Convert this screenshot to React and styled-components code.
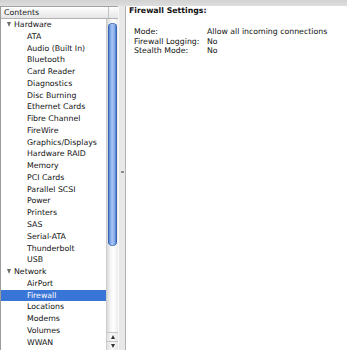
import React from 'react';
import styled, { createGlobalStyle } from 'styled-components';

const GlobalStyle = createGlobalStyle`
  html, body {
    margin: 0;
    padding: 0;
    background: #e6e6e6;
    overflow: hidden;
  }
  body {
    font-family: "DejaVu Sans", Verdana, sans-serif;
    font-size: 7.8px;
    color: #111;
  }
`;

const hardware = [
  'ATA', 'Audio (Built In)', 'Bluetooth', 'Card Reader', 'Diagnostics',
  'Disc Burning', 'Ethernet Cards', 'Fibre Channel', 'FireWire',
  'Graphics/Displays', 'Hardware RAID', 'Memory', 'PCI Cards',
  'Parallel SCSI', 'Power', 'Printers', 'SAS', 'Serial-ATA',
  'Thunderbolt', 'USB',
];

const network = ['AirPort', 'Firewall', 'Locations', 'Modems', 'Volumes', 'WWAN'];

const settings = [
  ['Mode:', 'Allow all incoming connections'],
  ['Firewall Logging:', 'No'],
  ['Stealth Mode:', 'No'],
];

const Window = styled.div`
  display: flex;
  flex-direction: column;
  width: 347px;
  height: 350px;
  overflow: hidden;
`;

const TopStrip = styled.div`
  height: 6px;
  flex: none;
  background: linear-gradient(#d2d2d2, #dedede);
`;

const Body = styled.div`
  flex: 1;
  display: flex;
  min-height: 0;
`;

const Sidebar = styled.div`
  width: 117px;
  flex: none;
  display: flex;
  flex-direction: column;
  border-left: 1px solid #9c9c9c;
  background: #fff;
`;

const HeaderRow = styled.div`
  display: flex;
  height: 11px;
  flex: none;
  border-top: 1px solid #a2a2a2;
  border-bottom: 1px solid #b2b2b2;
  background: linear-gradient(#ffffff, #f1f1f1 50%, #e6e6e6);
`;

const HeaderCell = styled.div`
  width: 104px;
  padding-left: 3px;
  line-height: 11px;
  border-right: 1px solid #c2c2c2;
  color: #1a1a1a;
`;

const ListArea = styled.div`
  flex: 1;
  display: flex;
  min-height: 0;
`;

const List = styled.div`
  width: 105px;
  flex: none;
  overflow: hidden;
`;

const Row = styled.div`
  height: 11.78px;
  line-height: 11.78px;
  white-space: nowrap;
  display: flex;
  align-items: center;
  padding-left: ${p => (p.$group ? 6 : 26)}px;
  background: ${p => (p.$selected ? '#3975d6' : 'transparent')};
  color: ${p => (p.$selected ? '#fff' : '#111')};
`;

const Triangle = styled.span`
  width: 0;
  height: 0;
  margin-right: 3px;
  border-left: 2.8px solid transparent;
  border-right: 2.8px solid transparent;
  border-top: 5px solid #6e6e6e;
`;

const Scrollbar = styled.div`
  width: 11px;
  flex: none;
  display: flex;
  flex-direction: column;
  border-left: 1px solid #cdcdcd;
  border-right: 1px solid #bdbdbd;
  background: linear-gradient(to right, #d9d9d9, #f3f3f3 30%, #ffffff 60%, #ececec);
`;

const Thumb = styled.div`
  margin: 4px 1px 0 1px;
  height: 223px;
  border-radius: 5px;
  background: linear-gradient(to right, #345fb0, #6f9ae2 20%, #a9c7f4 45%, #8ab0ec 70%, #4a78c9 90%, #3561b3);
  box-shadow: inset 0 0 0 0.5px #2c56a6;
`;

const Track = styled.div`
  flex: 1;
`;

const ArrowButton = styled.div`
  height: 8px;
  display: flex;
  align-items: center;
  justify-content: center;
  border-top: 1px solid #c4c4c4;
  background: linear-gradient(to right, #e2e2e2, #fafafa 50%, #e6e6e6);
`;

const Arrow = styled.span`
  width: 0;
  height: 0;
  border-left: 2.5px solid transparent;
  border-right: 2.5px solid transparent;
  ${p => (p.$up ? 'border-bottom: 4px solid #333;' : 'border-top: 4px solid #333;')}
`;

const Splitter = styled.div`
  width: 6px;
  flex: none;
  display: flex;
  align-items: center;
  justify-content: center;
  background: #e8e8e8;
  border-left: 1px solid #f8f8f8;
`;

const Grip = styled.span`
  width: 3px;
  height: 2px;
  margin-top: -12px;
  background: #8c8c8c;
`;

const Detail = styled.div`
  flex: 1;
  background: #fff;
  border-left: 1px solid #b3b3b3;
  padding: 0 0 0 3px;
`;

const Title = styled.div`
  font-weight: bold;
  line-height: 10px;
  color: #111;
`;

const Settings = styled.div`
  display: grid;
  grid-template-columns: 73px auto;
  margin: 11px 0 0 5px;
  line-height: 9.5px;
  white-space: nowrap;
`;

export default function App() {
  return (
    <Window>
      <GlobalStyle />
      <TopStrip />
      <Body>
        <Sidebar>
          <HeaderRow>
            <HeaderCell>Contents</HeaderCell>
          </HeaderRow>
          <ListArea>
            <List>
              <Row $group><Triangle />Hardware</Row>
              {hardware.map(name => <Row key={name}>{name}</Row>)}
              <Row $group><Triangle />Network</Row>
              {network.map(name => (
                <Row key={name} $selected={name === 'Firewall'}>{name}</Row>
              ))}
            </List>
            <Scrollbar>
              <Thumb />
              <Track />
              <ArrowButton><Arrow $up /></ArrowButton>
              <ArrowButton><Arrow /></ArrowButton>
            </Scrollbar>
          </ListArea>
        </Sidebar>
        <Splitter><Grip /></Splitter>
        <Detail>
          <Title>Firewall Settings:</Title>
          <Settings>
            {settings.map(([label, value]) => (
              <React.Fragment key={label}>
                <span>{label}</span>
                <span>{value}</span>
              </React.Fragment>
            ))}
          </Settings>
        </Detail>
      </Body>
    </Window>
  );
}
